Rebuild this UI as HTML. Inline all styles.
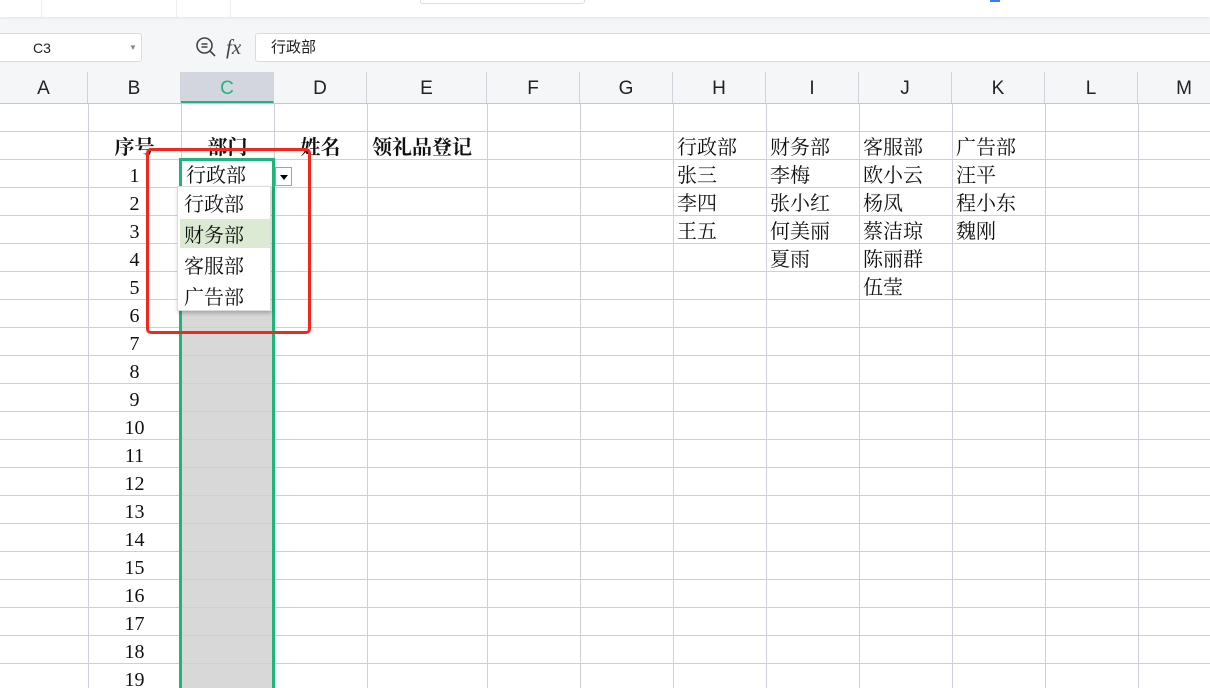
<!DOCTYPE html>
<html><head><meta charset="utf-8"><style>
*{margin:0;padding:0;box-sizing:border-box}
html,body{width:1210px;height:688px;overflow:hidden}
body{background:#f5f6f8;position:relative;font-family:"Liberation Serif","Noto Serif CJK SC",serif}
.abs{position:absolute}
.top{left:0;top:0;width:1210px;height:17px;background:#fff;box-shadow:0 1px 3px rgba(0,0,0,.08)}
.vl{position:absolute;top:104px;width:1px;height:584px;background:#cdd0dc}
.hl{position:absolute;left:0;width:1210px;height:1px;background:#cdd0dc}
.ch{position:absolute;top:72px;height:31px;line-height:33px;text-align:center;font-family:"Liberation Sans",sans-serif;font-size:19px;color:#222;border-right:1px solid #d0d3dc}
.t{position:absolute;font-size:20px;line-height:28px;padding-top:2px;color:#111;white-space:nowrap}
.n{position:absolute;left:88px;width:93px;text-align:center;font-size:20px;line-height:28px;padding-top:2px;color:#111}
.b{font-weight:bold}
</style></head><body>
<div class="abs top"></div>
<div class="abs" style="left:41px;top:0;width:1px;height:17px;background:#eee"></div>
<div class="abs" style="left:176px;top:0;width:1px;height:17px;background:#eee"></div>
<div class="abs" style="left:230px;top:0;width:1px;height:17px;background:#eee"></div>
<div class="abs" style="left:420px;top:0;width:165px;height:4px;border:1px solid #ddd;border-top:none;border-radius:0 0 3px 3px"></div>
<div class="abs" style="left:990px;top:0;width:10px;height:2px;background:#3b7cf0"></div>
<div class="abs" style="left:-3px;top:33px;width:145px;height:29px;background:#fff;border:1px solid #d8dbe2;border-radius:3px;font-family:'Liberation Sans',sans-serif;font-size:14px;line-height:28px;padding-left:35px;color:#222">C3<span style="position:absolute;left:131px;top:0;font-size:8px;color:#888">▼</span></div>
<svg class="abs" style="left:195px;top:36px" width="22" height="22" viewBox="0 0 22 22"><circle cx="9.5" cy="9.5" r="7.5" fill="none" stroke="#444" stroke-width="1.6"/><path d="M15 15l5 5M6.5 8h6M6.5 11h6" stroke="#444" stroke-width="1.6" fill="none"/></svg>
<div class="abs" style="left:226px;top:33px;font-family:'Liberation Serif',serif;font-style:italic;font-size:21px;line-height:28px;color:#444">fx</div>
<div class="abs" style="left:255px;top:33px;width:960px;height:29px;background:#fff;border:1px solid #d8dbe2;border-radius:3px;font-family:'Liberation Sans','Noto Sans CJK SC',sans-serif;font-size:15px;line-height:27px;padding-left:15px;color:#222">行政部</div>
<div class="abs" style="left:0;top:72px;width:1210px;height:32px;background:#f5f6f8;border-bottom:1px solid #c3c7d2"></div>
<div class="ch" style="left:0;width:88px">A</div>
<div class="ch" style="left:88px;width:93px">B</div>
<div class="ch" style="left:181px;width:93px;background:#d3d6de;color:#1fb57a;border-bottom:2px solid #1fb57a;height:31px">C</div>
<div class="ch" style="left:274px;width:93px">D</div>
<div class="ch" style="left:367px;width:120px">E</div>
<div class="ch" style="left:487px;width:93px">F</div>
<div class="ch" style="left:580px;width:93px">G</div>
<div class="ch" style="left:673px;width:93px">H</div>
<div class="ch" style="left:766px;width:93px">I</div>
<div class="ch" style="left:859px;width:93px">J</div>
<div class="ch" style="left:952px;width:93px">K</div>
<div class="ch" style="left:1045px;width:93px">L</div>
<div class="ch" style="left:1138px;width:93px">M</div>
<div class="abs" style="left:0;top:104px;width:1210px;height:584px;background:#fff"></div>
<div class="abs" style="left:181px;top:311px;width:93px;height:377px;background:#d8d8d8"></div>
<div class="hl" style="top:131px"></div><div class="hl" style="top:159px"></div><div class="hl" style="top:187px"></div><div class="hl" style="top:215px"></div><div class="hl" style="top:243px"></div><div class="hl" style="top:271px"></div><div class="hl" style="top:299px"></div><div class="hl" style="top:327px"></div><div class="hl" style="top:355px"></div><div class="hl" style="top:383px"></div><div class="hl" style="top:411px"></div><div class="hl" style="top:439px"></div><div class="hl" style="top:467px"></div><div class="hl" style="top:495px"></div><div class="hl" style="top:523px"></div><div class="hl" style="top:551px"></div><div class="hl" style="top:579px"></div><div class="hl" style="top:607px"></div><div class="hl" style="top:635px"></div><div class="hl" style="top:663px"></div>
<div class="vl" style="left:88px"></div><div class="vl" style="left:181px"></div><div class="vl" style="left:274px"></div><div class="vl" style="left:367px"></div><div class="vl" style="left:487px"></div><div class="vl" style="left:580px"></div><div class="vl" style="left:673px"></div><div class="vl" style="left:766px"></div><div class="vl" style="left:859px"></div><div class="vl" style="left:952px"></div><div class="vl" style="left:1045px"></div><div class="vl" style="left:1138px"></div>
<div class="n b" style="top:132px">序号</div>
<div class="t b" style="left:181px;width:93px;text-align:center;top:132px">部门</div>
<div class="t b" style="left:274px;width:93px;text-align:center;top:132px">姓名</div>
<div class="t b" style="left:372px;top:132px">领礼品登记</div>
<div class="n" style="top:160px">1</div><div class="n" style="top:188px">2</div><div class="n" style="top:216px">3</div><div class="n" style="top:244px">4</div><div class="n" style="top:272px">5</div><div class="n" style="top:300px">6</div><div class="n" style="top:328px">7</div><div class="n" style="top:356px">8</div><div class="n" style="top:384px">9</div><div class="n" style="top:412px">10</div><div class="n" style="top:440px">11</div><div class="n" style="top:468px">12</div><div class="n" style="top:496px">13</div><div class="n" style="top:524px">14</div><div class="n" style="top:552px">15</div><div class="n" style="top:580px">16</div><div class="n" style="top:608px">17</div><div class="n" style="top:636px">18</div><div class="n" style="top:664px">19</div>
<div class="t" style="left:677px;top:132px">行政部</div><div class="t" style="left:770px;top:132px">财务部</div><div class="t" style="left:863px;top:132px">客服部</div><div class="t" style="left:956px;top:132px">广告部</div>
<div class="t" style="left:677px;top:160px">张三</div><div class="t" style="left:770px;top:160px">李梅</div><div class="t" style="left:863px;top:160px">欧小云</div><div class="t" style="left:956px;top:160px">汪平</div>
<div class="t" style="left:677px;top:188px">李四</div><div class="t" style="left:770px;top:188px">张小红</div><div class="t" style="left:863px;top:188px">杨凤</div><div class="t" style="left:956px;top:188px">程小东</div>
<div class="t" style="left:677px;top:216px">王五</div><div class="t" style="left:770px;top:216px">何美丽</div><div class="t" style="left:863px;top:216px">蔡洁琼</div><div class="t" style="left:956px;top:216px">魏刚</div>
<div class="t" style="left:770px;top:244px">夏雨</div><div class="t" style="left:863px;top:244px">陈丽群</div>
<div class="t" style="left:863px;top:272px">伍莹</div>
<div class="abs" style="left:179px;top:158px;width:96px;height:530px;border:3px solid #1fb57a;border-bottom:none"></div>
<div class="t" style="left:186px;top:160px">行政部</div>
<div class="abs" style="left:275px;top:167px;width:17px;height:19px;border:1px solid #9aa3b5;background:#fff"><div style="position:absolute;left:4px;top:7px;width:0;height:0;border-left:4px solid transparent;border-right:4px solid transparent;border-top:5px solid #000"></div></div>
<div class="abs" style="left:177px;top:186px;width:94px;height:125px;background:#fff;box-shadow:1px 2px 4px rgba(0,0,0,.25);border:1px solid #ddd">
<div class="t" style="left:6px;top:1px;line-height:30px">行政部</div>
<div class="abs" style="left:2px;top:32px;width:90px;height:29px;background:#dce9d3"></div>
<div class="t" style="left:6px;top:32px;line-height:30px">财务部</div>
<div class="t" style="left:6px;top:63px;line-height:30px">客服部</div>
<div class="t" style="left:6px;top:94px;line-height:30px">广告部</div>
</div>
<div class="abs" style="left:146px;top:148px;width:165px;height:186px;border:3px solid #f0281e;border-radius:5px"></div>
</body></html>
